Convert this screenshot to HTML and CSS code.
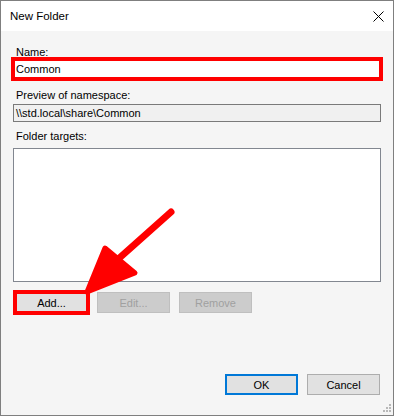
FILE: index.html
```html
<!DOCTYPE html>
<html lang="en">
<head>
    <meta charset="UTF-8">
    <title>New Folder</title>
    <link rel="stylesheet" href="styles.css">
</head>
<body>
    <div class="dialog">
        <div class="titlebar">
            <span class="title">New Folder</span>
            <svg class="close" width="11" height="11" viewBox="0 0 11 11">
                <path d="M0.5 0.5 L10.5 10.5 M10.5 0.5 L0.5 10.5" stroke="#000" stroke-width="1" fill="none"/>
            </svg>
        </div>

        <div class="content">
            <label class="field-label">Name:</label>
            <div class="text-box marked">Common</div>

            <label class="field-label preview-label">Preview of namespace:</label>
            <div class="text-box readonly">\\std.local\share\Common</div>

            <label class="field-label targets-label">Folder targets:</label>
            <div class="list-box"></div>

            <div class="button-row">
                <button class="btn marked">Add...</button>
                <button class="btn" disabled>Edit...</button>
                <button class="btn" disabled>Remove</button>
            </div>

            <div class="footer">
                <button class="btn default">OK</button>
                <button class="btn">Cancel</button>
            </div>
        </div>

        <!-- annotation arrow, drawn over the dialog -->
        <svg class="annotation" width="394" height="416" viewBox="0 0 394 416">
            <line x1="171" y1="212" x2="116" y2="261" stroke="#f00" stroke-width="7" stroke-linecap="round"/>
            <polygon points="105,248 135,273 87,292" fill="#f00" stroke="#f00" stroke-width="5" stroke-linejoin="round"/>
        </svg>

        <svg class="grip" width="9" height="9" viewBox="0 0 9 9">
            <rect x="6" y="0" width="2" height="2" fill="#b8b8b8"/>
            <rect x="3" y="3" width="2" height="2" fill="#b8b8b8"/>
            <rect x="6" y="3" width="2" height="2" fill="#b8b8b8"/>
            <rect x="0" y="6" width="2" height="2" fill="#b8b8b8"/>
            <rect x="3" y="6" width="2" height="2" fill="#b8b8b8"/>
            <rect x="6" y="6" width="2" height="2" fill="#b8b8b8"/>
        </svg>
    </div>
</body>
</html>
```

FILE: styles.css
```css
* {
    margin: 0;
    padding: 0;
    box-sizing: border-box;
}

body {
    font-family: "Liberation Sans", Arial, sans-serif;
    font-size: 11px;
    color: #000;
    background: #fff;
}

.dialog {
    position: relative;
    width: 394px;
    height: 416px;
    border: 1px solid #7f7f7f;
    background: #f5f5f5;
    display: flex;
    flex-direction: column;
}

.titlebar {
    height: 30px;
    background: #fff;
    display: flex;
    align-items: center;
    justify-content: space-between;
    padding: 0 9px 0 9px;
    font-size: 11.5px;
}

.close {
    display: block;
}

.content {
    flex: 1;
    display: flex;
    flex-direction: column;
    padding: 14px 12px 20px 12px;
}

.field-label {
    display: block;
    line-height: 14px;
    padding-left: 3px;
}

.preview-label {
    margin-top: 9px;
}

.targets-label {
    margin-top: 7px;
}

.text-box {
    height: 20px;
    line-height: 18px;
    border: 1px solid #7a7a7a;
    background: #fff;
    padding-left: 2px;
    white-space: nowrap;
}

.text-box.readonly {
    height: 18px;
    line-height: 16px;
    margin-top: 2px;
    background: #f0f0f0;
}

.marked {
    outline: 4px solid #f00;
    outline-offset: -2px;
}

.list-box {
    margin-top: 5px;
    height: 134px;
    border: 1px solid #828790;
    background: #fff;
}

.button-row {
    display: flex;
    gap: 9px;
    margin-top: 10px;
    padding-left: 2px;
}

.footer {
    display: flex;
    justify-content: flex-end;
    gap: 9px;
    margin-top: auto;
    padding-right: 1px;
}

.btn {
    width: 73px;
    height: 21px;
    font-family: inherit;
    font-size: 11px;
    color: #000;
    background: #e1e1e1;
    border: 1px solid #adadad;
}

.btn:disabled {
    background: #cccccc;
    border-color: #bfbfbf;
    color: #a0a0a0;
}

.btn.default {
    border: 2px solid #0078d7;
}

.annotation {
    position: absolute;
    left: -1px;
    top: -1px;
    pointer-events: none;
}

.grip {
    position: absolute;
    right: 1px;
    bottom: 2px;
}
```
